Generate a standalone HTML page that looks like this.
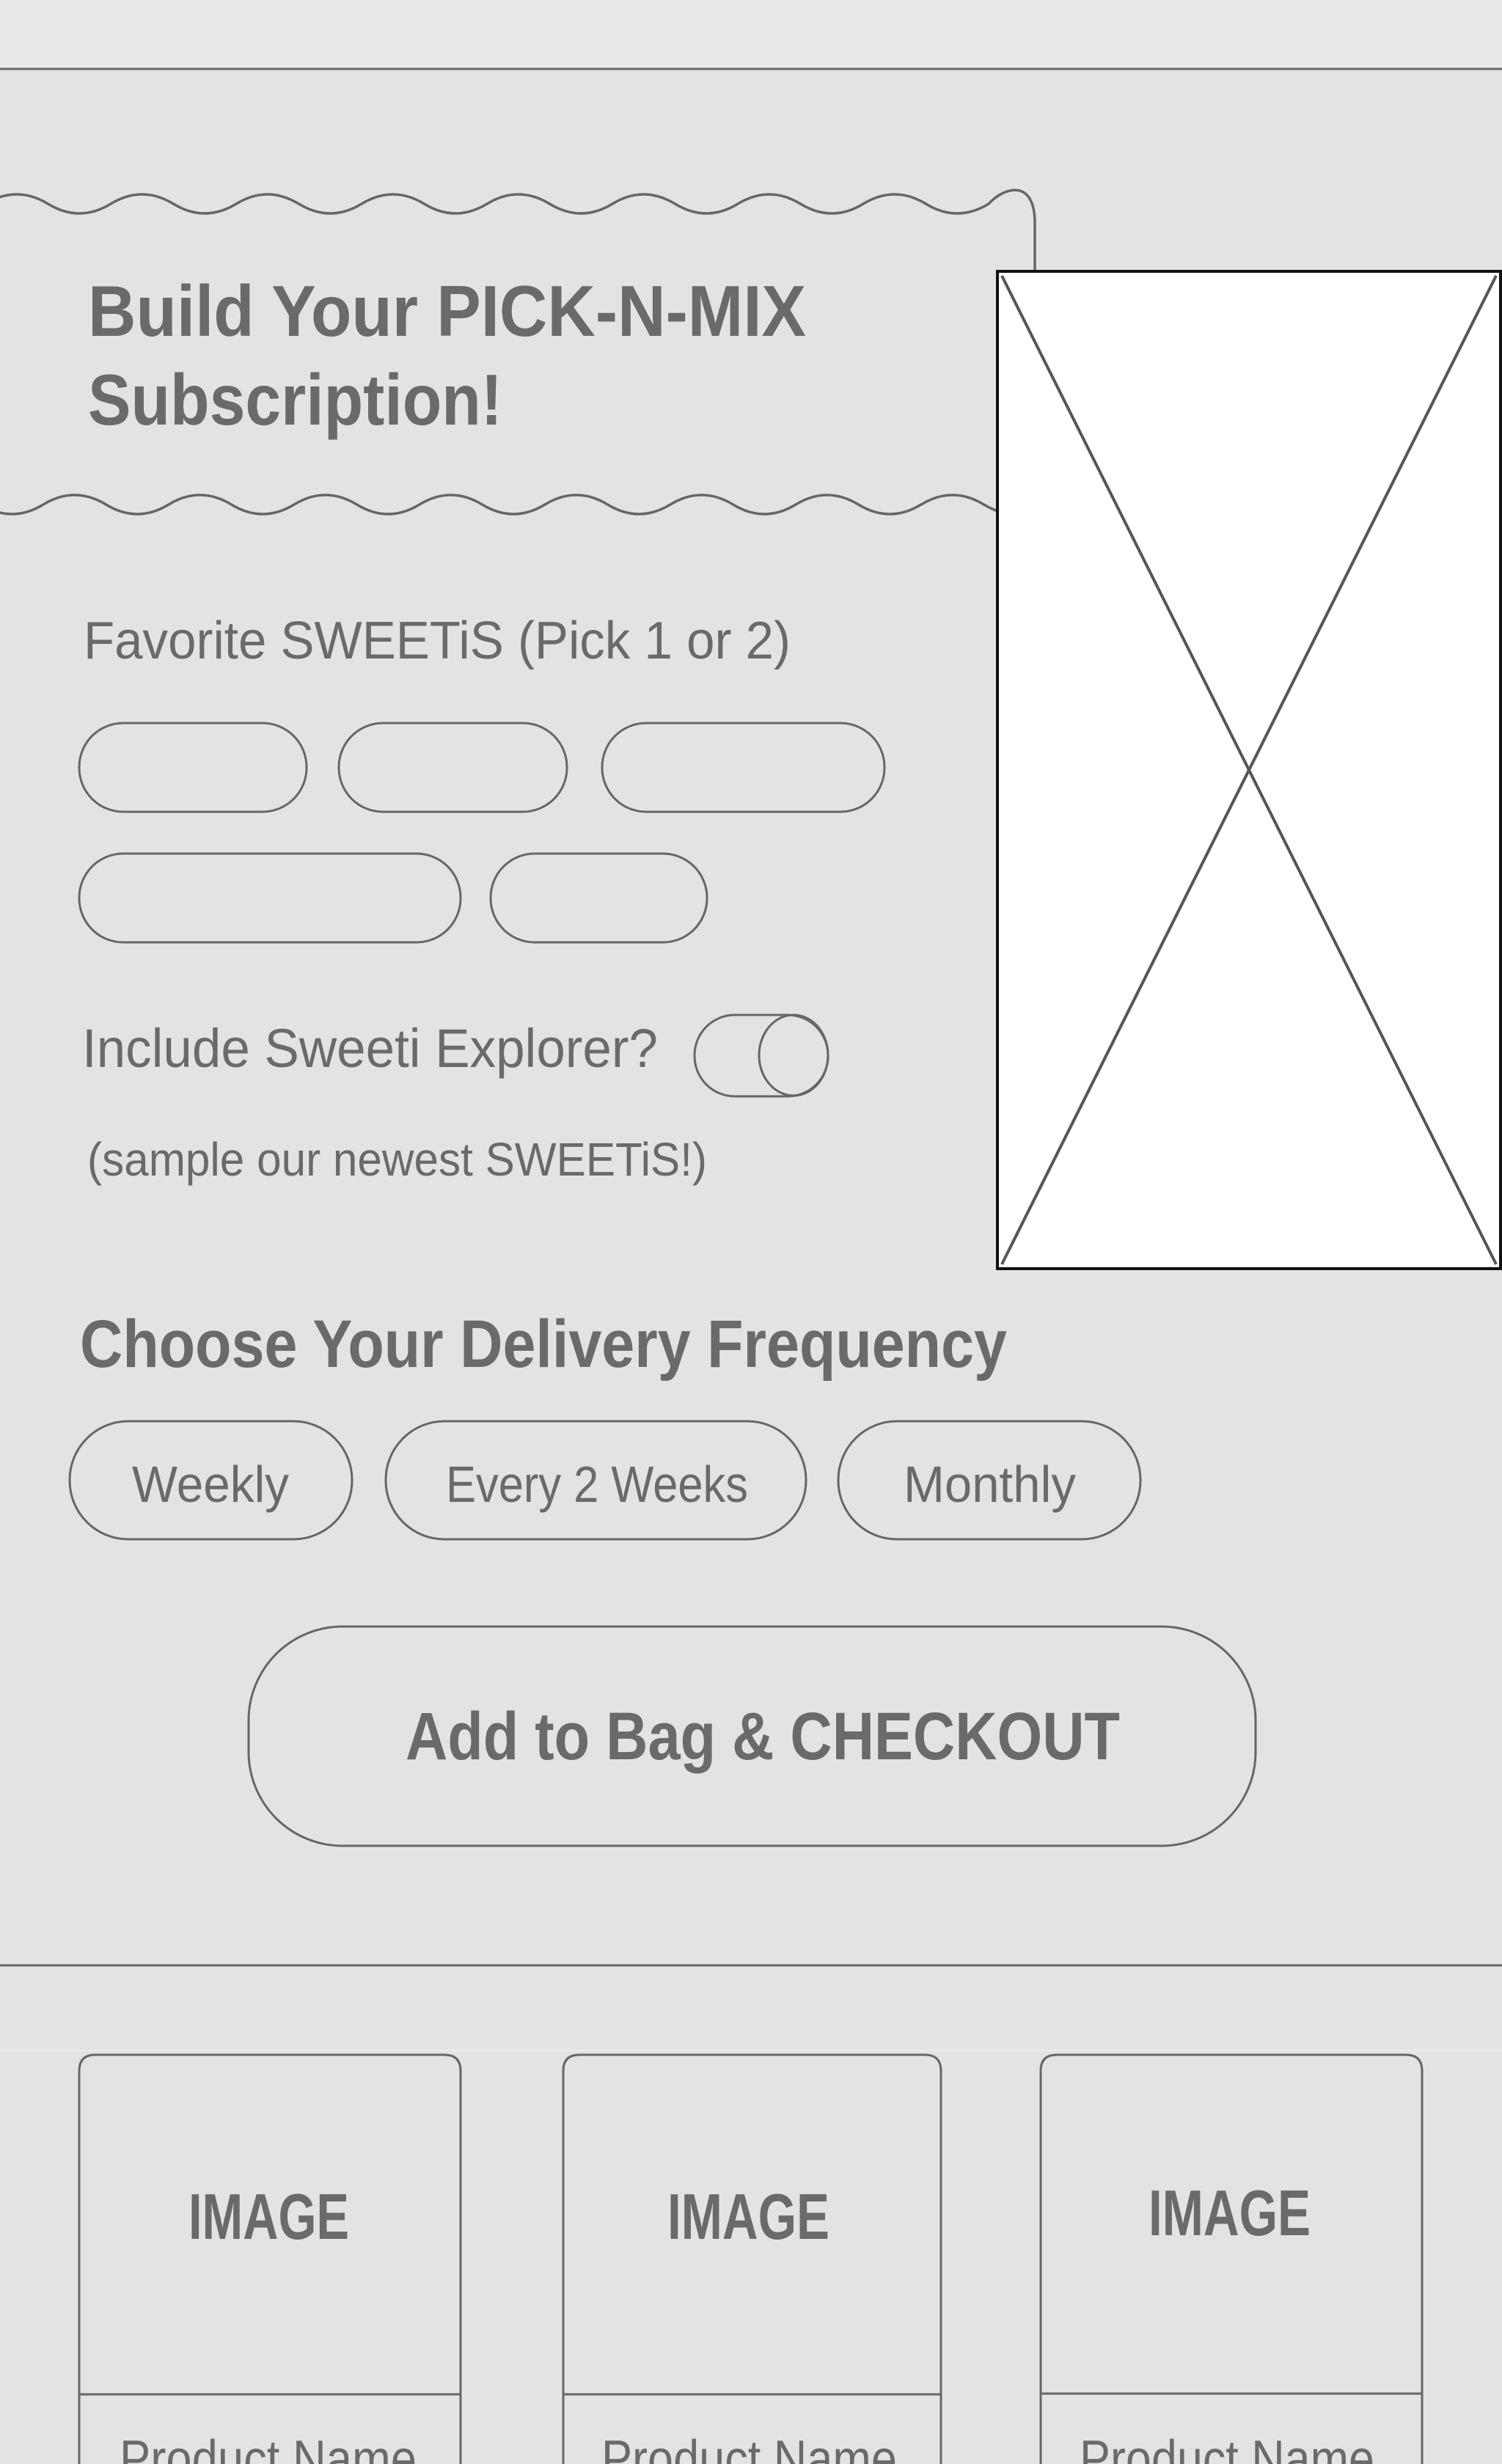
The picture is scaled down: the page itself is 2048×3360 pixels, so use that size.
<!DOCTYPE html>
<html><head><meta charset="utf-8"><style>
html,body{margin:0;padding:0;background:#e3e3e3;}
svg{display:block;}
text{font-family:"Liberation Sans",sans-serif;fill:#6a6a6a;}
.b{font-weight:bold;}
</style></head><body>
<svg width="2048" height="3360" viewBox="0 0 2048 3360" xmlns="http://www.w3.org/2000/svg">
<rect x="0" y="0" width="2048" height="3360" fill="#e3e3e3"/>
<rect x="0" y="0" width="2048" height="94" fill="#e8e8ea"/>
<line x1="0" y1="94" x2="2048" y2="94" stroke="#666" stroke-width="3"/>

<path d="M -20 278 q 42.75 -26 85.5 0 t 85.5 0 t 85.5 0 t 85.5 0 t 85.5 0 t 85.5 0 t 85.5 0 t 85.5 0 t 85.5 0 t 85.5 0 t 85.5 0 t 85.5 0 t 85.5 0 t 85.5 0 t 85.5 0 t 85.5 0 C 1370 254 1411 244 1411 304 L 1411 368" fill="none" stroke="#666" stroke-width="3.5"/>
<path d="M -112 688 q 42.75 -26 85.5 0 t 85.5 0 t 85.5 0 t 85.5 0 t 85.5 0 t 85.5 0 t 85.5 0 t 85.5 0 t 85.5 0 t 85.5 0 t 85.5 0 t 85.5 0 t 85.5 0 t 85.5 0 t 85.5 0 t 85.5 0 t 85.5 0 t 85.5 0" fill="none" stroke="#666" stroke-width="3.5"/>

<text class="b" x="120" y="458" font-size="98" textLength="979" lengthAdjust="spacingAndGlyphs">Build Your PICK-N-MIX</text>
<text class="b" x="120" y="579" font-size="98" textLength="565" lengthAdjust="spacingAndGlyphs">Subscription!</text>

<rect x="1360" y="370" width="686" height="1360" fill="#fff" stroke="#111" stroke-width="4"/>
<line x1="1366" y1="376" x2="2040" y2="1724" stroke="#555" stroke-width="4"/>
<line x1="2040" y1="376" x2="1366" y2="1724" stroke="#555" stroke-width="4"/>

<text x="114" y="898" font-size="72" textLength="964" lengthAdjust="spacingAndGlyphs">Favorite SWEETiS (Pick 1 or 2)</text>

<g fill="none" stroke="#666" stroke-width="3">
<rect x="108" y="986" width="310" height="121" rx="60"/>
<rect x="462" y="986" width="311" height="121" rx="60"/>
<rect x="821" y="986" width="385" height="121" rx="60"/>
<rect x="108" y="1164" width="520" height="121" rx="60"/>
<rect x="669" y="1164" width="295" height="121" rx="60"/>
<rect x="947" y="1384" width="182" height="111" rx="55"/>
<ellipse cx="1082" cy="1439" rx="47" ry="55"/>
<rect x="95" y="1938" width="385" height="161" rx="80"/>
<rect x="526" y="1938" width="573" height="161" rx="80"/>
<rect x="1143" y="1938" width="412" height="161" rx="80"/>
<rect x="339" y="2218" width="1373" height="299" rx="128"/>
</g>

<text x="112" y="1455" font-size="74" textLength="785" lengthAdjust="spacingAndGlyphs">Include Sweeti Explorer?</text>
<text x="119" y="1603" font-size="64" textLength="845" lengthAdjust="spacingAndGlyphs">(sample our newest SWEETiS!)</text>

<text class="b" x="109" y="1864" font-size="92" textLength="1264" lengthAdjust="spacingAndGlyphs">Choose Your Delivery Frequency</text>

<text x="180" y="2048" font-size="70" textLength="214" lengthAdjust="spacingAndGlyphs">Weekly</text>
<text x="608" y="2048" font-size="70" textLength="412" lengthAdjust="spacingAndGlyphs">Every 2 Weeks</text>
<text x="1232" y="2048" font-size="70" textLength="235" lengthAdjust="spacingAndGlyphs">Monthly</text>

<text class="b" x="553" y="2399" font-size="92" textLength="974" lengthAdjust="spacingAndGlyphs">Add to Bag &amp; CHECKOUT</text>

<line x1="0" y1="2680" x2="2048" y2="2680" stroke="#666" stroke-width="3"/>
<line x1="0" y1="2796" x2="2048" y2="2796" stroke="#ebebeb" stroke-width="2"/>

<g fill="none" stroke="#666" stroke-width="3">
<path d="M 108 3360 L 108 2824 Q 108 2802 130 2802 L 606 2802 Q 628 2802 628 2824 L 628 3360"/>
<path d="M 768 3360 L 768 2824 Q 768 2802 790 2802 L 1261 2802 Q 1283 2802 1283 2824 L 1283 3360"/>
<path d="M 1419 3360 L 1419 2824 Q 1419 2802 1441 2802 L 1917 2802 Q 1939 2802 1939 2824 L 1939 3360"/>
<line x1="108" y1="3265" x2="628" y2="3265"/>
<line x1="768" y1="3265" x2="1283" y2="3265"/>
<line x1="1419" y1="3264" x2="1939" y2="3264"/>
</g>

<text class="b" x="257" y="3053" font-size="88" textLength="219" lengthAdjust="spacingAndGlyphs">IMAGE</text>
<text class="b" x="910" y="3053" font-size="88" textLength="221" lengthAdjust="spacingAndGlyphs">IMAGE</text>
<text class="b" x="1566" y="3048" font-size="88" textLength="221" lengthAdjust="spacingAndGlyphs">IMAGE</text>

<text x="163" y="3378" font-size="72" textLength="405" lengthAdjust="spacingAndGlyphs">Product Name</text>
<text x="820" y="3378" font-size="72" textLength="403" lengthAdjust="spacingAndGlyphs">Product Name</text>
<text x="1472" y="3378" font-size="72" textLength="402" lengthAdjust="spacingAndGlyphs">Product Name</text>
</svg>
</body></html>
